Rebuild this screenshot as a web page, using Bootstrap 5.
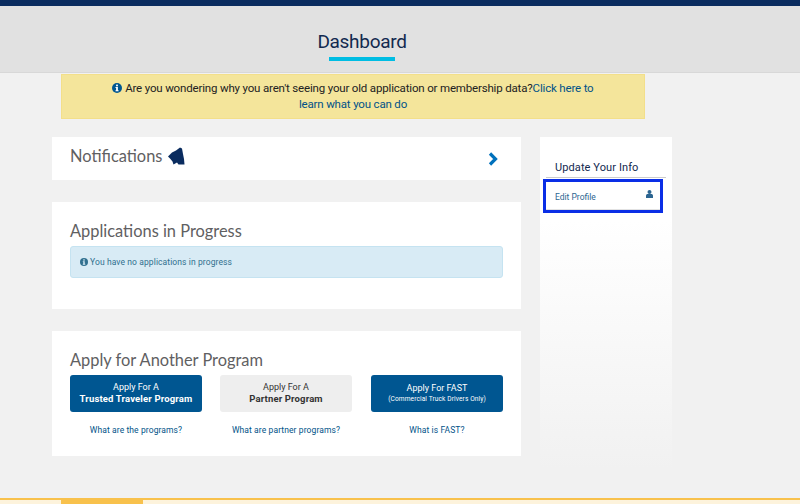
<!DOCTYPE html>
<html lang="en">
<head>
<meta charset="utf-8">
<title>Dashboard</title>
<link href="https://cdn.jsdelivr.net/npm/bootstrap@5.3.0/dist/css/bootstrap.min.css" rel="stylesheet">
<style>
html,body{height:504px;overflow:hidden}
body{background:#f1f1f1;font-family:Roboto,"Liberation Sans",sans-serif;color:#222;display:flex;flex-direction:column}
a{text-decoration:none;color:#005288}
.topstrip{height:6px;background:#0a2c5f}
.headband{height:67px;background:#e1e1e1;border-bottom:1px solid #d8d8d8;padding-top:24px;padding-right:76px}
.headtitle{font-size:19px;line-height:24px;color:#12294f;margin:0;font-weight:400;letter-spacing:-.3px}
.headrule{width:66px;height:4px;background:#00bde3;margin:3px auto 0 auto}
.notice{width:584px;height:45px;margin:1px 0 18px 61px;background:#f4e59b;border:1px solid #f3df8a;font-size:11.5px;line-height:16px;padding:5px 45px;text-align:center;color:#222;letter-spacing:-.17px}
.notice svg{vertical-align:-1px}
.mainrow{margin-left:52px;gap:19px}
.maincol{width:469px;gap:22px}
.panel{background:#fff;padding:0 18px}
.panel-note{height:43px}
.panel-note .paneltitle{margin-top:-5px;gap:6px}
.panel-progress{height:107px;padding-top:19px}
.panel-apply{height:125px;padding-top:19px}
.paneltitle{font-family:Lato,"Open Sans",sans-serif;font-size:16.4px;line-height:20px;color:#5f6062;margin:0;font-weight:400}
.infobox{height:32px;background:#d8ebf5;border:1px solid #c5e3f1;border-radius:3px;font-size:8.5px;color:#31708f;padding:0 0 0 9px;margin-top:5px;display:flex;align-items:center;gap:2px;letter-spacing:.1px}
.progcol{width:132px}
.applyrow{margin-top:5px;gap:18px}
.progcol:last-child{margin-left:1px}
.progbtn{display:flex;flex-direction:column;justify-content:center;align-items:center;height:37px;border-radius:3px;background:#005691;color:#fff;font-size:9px;line-height:12px;padding:0 0 2px 0}
.progbtn.light{background:#eeeeee;color:#333}
.progbtn b{font-weight:700;font-size:9.5px;letter-spacing:.15px}
.progbtn small{font-size:6.6px;line-height:10px;font-weight:400;letter-spacing:.1px}
.proglink{display:block;text-align:center;font-size:8.5px;margin-top:12px;line-height:12px;letter-spacing:.1px}
.sidepanel{width:132px;height:333px;background:linear-gradient(#fff 0,#fff 25%,#f1f1f1 100%);padding-top:23px}
.sidehead{font-size:11px;line-height:14px;color:#12294f;margin:1px 0 0 15px;font-weight:400;letter-spacing:.1px}
.siderule{height:1px;background:#ccc;margin:2px 6px 0 6px}
.sideitem{margin:1px 0 0 3px;width:120px;height:34px;border:3px solid #0a2ee6;display:flex;justify-content:space-between;align-items:center;padding:2px 7px 0 9px;font-size:8.5px;color:#2c6591;box-shadow:inset 0 -1px 0 #e2e2e2}
.sideitem svg{margin-top:-6px}
.footline{margin-top:auto;height:6px;border-top:2px solid #f8c14c;background:#fdf3dc}
.foottab{width:82px;height:4px;margin-left:61px;background:#f8c14c}
</style>
</head>
<body>
<div class="topstrip"></div>
<header class="headband text-center">
  <h1 class="headtitle">Dashboard</h1>
  <div class="headrule"></div>
</header>
<div class="notice">
  <svg width="10" height="10" viewBox="0 0 10 10"><circle cx="5" cy="5" r="5" fill="#005691"/><rect x="4.1" y="1.6" width="1.8" height="1.7" fill="#fff"/><path d="M3.5 4.1h2.4v3.2h.7v1H3.5v-1h.6V5.1h-.6z" fill="#fff"/></svg>
  Are you wondering why you aren't seeing your old application or membership data?<a href="#">Click here to learn what you can do</a>
</div>
<div class="mainrow d-flex">
  <div class="maincol d-flex flex-column">
    <section class="panel panel-note d-flex justify-content-between align-items-center">
      <h2 class="paneltitle d-flex align-items-center">Notifications
        <svg width="17" height="18" viewBox="0 0 17 18"><path d="M0 9.5 4 5.5 8 3.5 12 .5 14 1.5 15 7 16 12 16.5 17.5 10.5 17.5 9 15.5 5.5 17.5 4.5 14.5 2 11.5z" fill="#0a2c5f"/></svg>
      </h2>
      <svg class="me-1" width="11" height="14" viewBox="0 0 11 14"><path d="M2 1.5 7.5 7 2 12.5" fill="none" stroke="#0071bc" stroke-width="3.2"/></svg>
    </section>
    <section class="panel panel-progress">
      <h2 class="paneltitle">Applications in Progress</h2>
      <div class="infobox">
        <svg width="8" height="8" viewBox="0 0 10 10"><circle cx="5" cy="5" r="5" fill="#31708f"/><rect x="4.1" y="1.6" width="1.8" height="1.7" fill="#d8ebf5"/><path d="M3.5 4.1h2.4v3.2h.7v1H3.5v-1h.6V5.1h-.6z" fill="#d8ebf5"/></svg>
        You have no applications in progress
      </div>
    </section>
    <section class="panel panel-apply">
      <h2 class="paneltitle">Apply for Another Program</h2>
      <div class="applyrow d-flex">
        <div class="progcol"><a class="progbtn" href="#">Apply For A<b>Trusted Traveler Program</b></a><a class="proglink" href="#">What are the programs?</a></div>
        <div class="progcol"><a class="progbtn light" href="#">Apply For A<b>Partner Program</b></a><a class="proglink" href="#">What are partner programs?</a></div>
        <div class="progcol"><a class="progbtn" href="#">Apply For FAST<small>(Commercial Truck Drivers Only)</small></a><a class="proglink" href="#">What is FAST?</a></div>
      </div>
    </section>
  </div>
  <aside class="sidepanel">
    <h3 class="sidehead">Update Your Info</h3>
    <div class="siderule"></div>
    <a class="sideitem" href="#">Edit Profile
      <svg width="7" height="8" viewBox="0 0 7 8"><circle cx="3.5" cy="2" r="2" fill="#2c6591"/><path d="M0 8V5.6C0 4.6.8 4 1.8 4h3.4C6.2 4 7 4.6 7 5.6V8z" fill="#2c6591"/></svg>
    </a>
  </aside>
</div>
<footer class="footline"><div class="foottab"></div></footer>
<script src="https://cdn.jsdelivr.net/npm/bootstrap@5.3.0/dist/js/bootstrap.bundle.min.js"></script>
</body>
</html>
